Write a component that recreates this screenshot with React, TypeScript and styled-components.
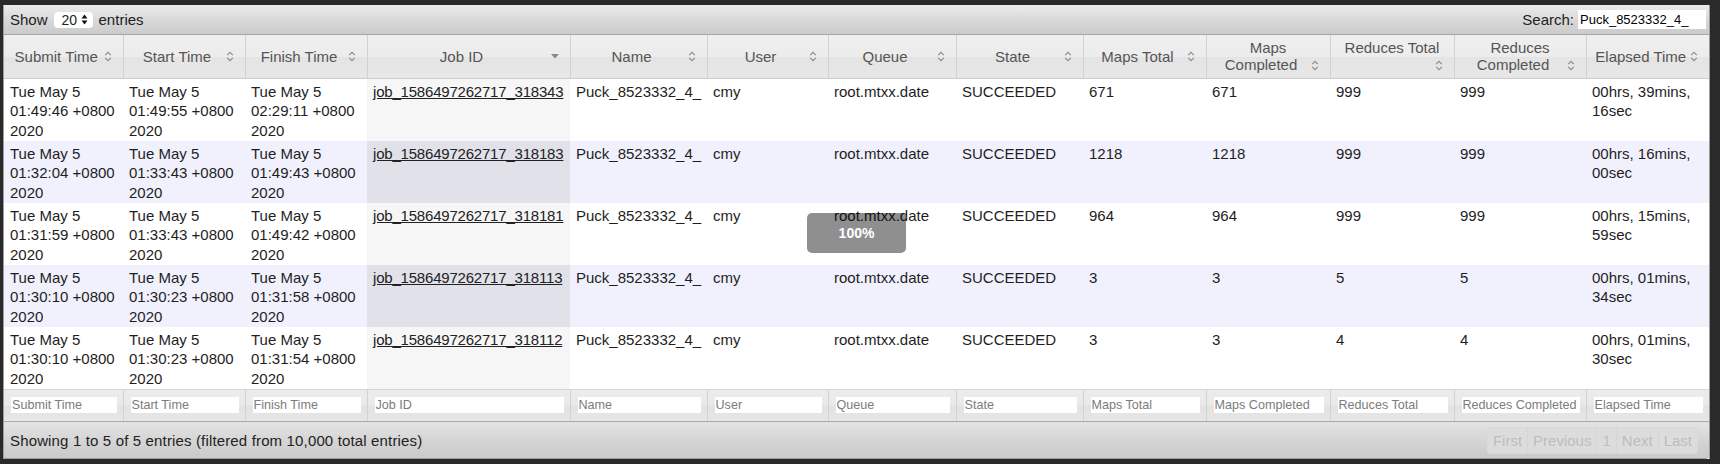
import React from "react";
import styled, { createGlobalStyle } from "styled-components";

const GlobalStyle = createGlobalStyle`
  html, body {
    margin: 0;
    padding: 0;
    background: #2a2a2a;
  }
  body {
    font-family: "Liberation Sans", Helvetica, Arial, sans-serif;
    font-size: 15px;
    color: #222;
  }
`;

type SortKind = "both" | "desc";

interface IColumn {
  title: string;
  width: number;
  sort: SortKind;
}

const columns: IColumn[] = [
  { title: "Submit Time", width: 119, sort: "both" },
  { title: "Start Time", width: 122, sort: "both" },
  { title: "Finish Time", width: 122, sort: "both" },
  { title: "Job ID", width: 203, sort: "desc" },
  { title: "Name", width: 137, sort: "both" },
  { title: "User", width: 121, sort: "both" },
  { title: "Queue", width: 128, sort: "both" },
  { title: "State", width: 127, sort: "both" },
  { title: "Maps Total", width: 123, sort: "both" },
  { title: "Maps Completed", width: 124, sort: "both" },
  { title: "Reduces Total", width: 124, sort: "both" },
  { title: "Reduces Completed", width: 132, sort: "both" },
  { title: "Elapsed Time", width: 123, sort: "both" },
];

interface IJob {
  submit: string;
  start: string;
  finish: string;
  id: string;
  mapsTotal: string;
  mapsDone: string;
  redTotal: string;
  redDone: string;
  elapsed: [string, string];
}

const jobs: IJob[] = [
  {
    submit: "01:49:46",
    start: "01:49:55",
    finish: "02:29:11",
    id: "job_1586497262717_318343",
    mapsTotal: "671",
    mapsDone: "671",
    redTotal: "999",
    redDone: "999",
    elapsed: ["00hrs, 39mins,", "16sec"],
  },
  {
    submit: "01:32:04",
    start: "01:33:43",
    finish: "01:49:43",
    id: "job_1586497262717_318183",
    mapsTotal: "1218",
    mapsDone: "1218",
    redTotal: "999",
    redDone: "999",
    elapsed: ["00hrs, 16mins,", "00sec"],
  },
  {
    submit: "01:31:59",
    start: "01:33:43",
    finish: "01:49:42",
    id: "job_1586497262717_318181",
    mapsTotal: "964",
    mapsDone: "964",
    redTotal: "999",
    redDone: "999",
    elapsed: ["00hrs, 15mins,", "59sec"],
  },
  {
    submit: "01:30:10",
    start: "01:30:23",
    finish: "01:31:58",
    id: "job_1586497262717_318113",
    mapsTotal: "3",
    mapsDone: "3",
    redTotal: "5",
    redDone: "5",
    elapsed: ["00hrs, 01mins,", "34sec"],
  },
  {
    submit: "01:30:10",
    start: "01:30:23",
    finish: "01:31:54",
    id: "job_1586497262717_318112",
    mapsTotal: "3",
    mapsDone: "3",
    redTotal: "4",
    redDone: "4",
    elapsed: ["00hrs, 01mins,", "30sec"],
  },
];

const SortIcon: React.FC<{ kind: SortKind }> = ({ kind }) => (
  <IconBox>
    {kind === "both" ? (
      <svg width="8" height="11" viewBox="0 0 8 11">
        <path d="M1.2 4.2 L4 1.4 L6.8 4.2" fill="none" stroke="#8a8a8a" strokeWidth="1.1" />
        <path d="M1.2 6.8 L4 9.6 L6.8 6.8" fill="none" stroke="#8a8a8a" strokeWidth="1.1" />
      </svg>
    ) : (
      <svg width="8" height="5" viewBox="0 0 8 5">
        <polygon points="0,0 8,0 4,4.5" fill="#8a8a8a" />
      </svg>
    )}
  </IconBox>
);

const DateCell: React.FC<{ time: string }> = ({ time }) => (
  <>
    Tue May 5
    <br />
    {time} +0800
    <br />
    2020
  </>
);

const App: React.FC = () => {
  return (
    <>
      <GlobalStyle />
      <Page>
        <Widget>
          <Toolbar>
            <ToolGroup>
              Show
              <SelectBox>
                20
                <svg width="7" height="11" viewBox="0 0 7 11">
                  <polygon points="0.5,4.5 6.5,4.5 3.5,0.5" fill="#111" />
                  <polygon points="0.5,6.5 6.5,6.5 3.5,10.5" fill="#111" />
                </svg>
              </SelectBox>
              entries
            </ToolGroup>
            <ToolGroup>
              Search:
              <SearchInput readOnly value="Puck_8523332_4_" />
            </ToolGroup>
          </Toolbar>

          <Table>
            <colgroup>
              {columns.map((c) => (
                <col key={c.title} style={{ width: c.width }} />
              ))}
            </colgroup>
            <thead>
              <tr>
                {columns.map((c) => (
                  <HeadCell key={c.title}>
                    {c.title}
                    <SortIcon kind={c.sort} />
                  </HeadCell>
                ))}
              </tr>
            </thead>
            <tbody>
              {jobs.map((j, i) => {
                const even = i % 2 === 1;
                return (
                  <Row key={j.id} $even={even}>
                    <Cell>
                      <DateCell time={j.submit} />
                    </Cell>
                    <Cell>
                      <DateCell time={j.start} />
                    </Cell>
                    <Cell>
                      <DateCell time={j.finish} />
                    </Cell>
                    <Cell $sorted $even={even}>
                      <JobLink href="#">{j.id}</JobLink>
                    </Cell>
                    <Cell>Puck_8523332_4_</Cell>
                    <Cell>cmy</Cell>
                    <Cell>root.mtxx.date</Cell>
                    <Cell>SUCCEEDED</Cell>
                    <Cell>{j.mapsTotal}</Cell>
                    <Cell>{j.mapsDone}</Cell>
                    <Cell>{j.redTotal}</Cell>
                    <Cell>{j.redDone}</Cell>
                    <Cell>
                      {j.elapsed[0]}
                      <br />
                      {j.elapsed[1]}
                    </Cell>
                  </Row>
                );
              })}
            </tbody>
            <tfoot>
              <tr>
                {columns.map((c) => (
                  <FilterCell key={c.title}>
                    <FilterInput placeholder={c.title} />
                  </FilterCell>
                ))}
              </tr>
            </tfoot>
          </Table>

          <Footer>
            <FooterInfo>Showing 1 to 5 of 5 entries (filtered from 10,000 total entries)</FooterInfo>
            <Pager>
              <PageButton>First</PageButton>
              <PageButton>Previous</PageButton>
              <PageButton>1</PageButton>
              <PageButton>Next</PageButton>
              <PageButton>Last</PageButton>
            </Pager>
          </Footer>

          <Progress>100%</Progress>
        </Widget>
      </Page>
    </>
  );
};

export default App;

const Page = styled.div`
  padding: 5px 10px 5px 3px;
`;

const Widget = styled.div`
  position: relative;
  width: 1707px;
  box-sizing: border-box;
  border-left: 1px solid #9c9c9c;
  border-right: 1px solid #9c9c9c;
  background: #fff;
`;

const Toolbar = styled.div`
  height: 29px;
  display: flex;
  align-items: center;
  justify-content: space-between;
  padding: 0 3px 0 6px;
  background: linear-gradient(#ebebeb, #d6d6d6 60%, #cbcbcb);
  border-bottom: 1px solid #a6a6a6;
  font-size: 15px;
  color: #222;
`;

const ToolGroup = styled.div`
  display: flex;
  align-items: center;
  gap: 5px;
`;

const SelectBox = styled.span`
  display: inline-flex;
  align-items: center;
  justify-content: space-between;
  width: 39px;
  height: 16px;
  box-sizing: border-box;
  padding: 0 5px 0 8px;
  margin: 0 1px;
  background: #fff;
  border-radius: 4px;
  font-size: 14px;
`;

const SearchInput = styled.input`
  width: 128px;
  height: 19px;
  box-sizing: border-box;
  border: 0;
  padding: 0 2px;
  margin-left: -1px;
  font-family: "Liberation Sans", Helvetica, Arial, sans-serif;
  font-size: 13px;
  color: #000;
  background: #fff;
  outline: 0;
`;

const Table = styled.table`
  width: 100%;
  table-layout: fixed;
  border-collapse: collapse;
`;

const HeadCell = styled.th`
  height: 43px;
  padding: 3px 8px 3px 8px;
  box-sizing: border-box;
  vertical-align: middle;
  text-align: center;
  font-weight: normal;
  font-size: 15px;
  line-height: 17.5px;
  color: #555;
  background: linear-gradient(#efefef 0%, #ececec 50%, #e4e4e4 52%, #e7e7e7 100%);
  border-left: 1px solid #d2d2d2;
  border-bottom: 1px solid #cdcdcd;

  &:first-child {
    border-left: 0;
  }
`;

const IconBox = styled.span`
  float: right;
  width: 14px;
  height: 17.5px;
  display: flex;
  align-items: center;
  justify-content: center;
`;

const Row = styled.tr<{ $even: boolean }>`
  background: ${(p) => (p.$even ? "#f1f1fd" : "#fff")};
`;

const Cell = styled.td<{ $sorted?: boolean; $even?: boolean }>`
  padding: 3px 4px 0.5px 6px;
  vertical-align: top;
  font-size: 15px;
  line-height: 19.5px;
  color: #1e1e1e;
  white-space: nowrap;
  overflow: hidden;
  background: ${(p) => (p.$sorted ? (p.$even ? "#e1e1e9" : "#f6f6f6") : "transparent")};
`;

const JobLink = styled.a`
  color: #222;
  text-decoration: underline;
  letter-spacing: -0.2px;
`;

const FilterCell = styled.th`
  height: 32px;
  padding: 0 6px 0 7px;
  box-sizing: border-box;
  vertical-align: middle;
  background: linear-gradient(#ececec 0%, #e9e9e9 50%, #e2e2e2 52%, #e6e6e6 100%);
  border-left: 1px solid #d2d2d2;
  border-top: 1px solid #d6d6d6;

  &:first-child {
    border-left: 0;
  }
`;

const FilterInput = styled.input`
  display: block;
  width: 100%;
  height: 16px;
  box-sizing: border-box;
  border: 0;
  padding: 0 1px;
  font-family: "Liberation Sans", Helvetica, Arial, sans-serif;
  font-size: 12.6px;
  background: #fff;
  outline: 0;

  &::placeholder {
    color: #7c7c7c;
  }
`;

const Footer = styled.div`
  height: 38px;
  box-sizing: border-box;
  display: flex;
  align-items: center;
  justify-content: space-between;
  padding: 0 11px 0 6px;
  background: linear-gradient(#e4e4e4, #d4d4d4 55%, #cacaca);
  border-top: 1px solid #a9a9a9;
  border-bottom: 1px solid #9c9c9c;
  border-bottom-right-radius: 4px;
  font-size: 15px;
  color: #222;
`;

const FooterInfo = styled.span`
  letter-spacing: 0.15px;
`;

const Pager = styled.div`
  display: flex;
  height: 25px;
  margin-top: 1px;
  border: 1px solid #d9d9d9;
  border-radius: 3px;
  background: #dcdcdc;
`;

const PageButton = styled.span`
  display: flex;
  align-items: center;
  padding: 0 5px;
  font-size: 15px;
  color: #bdbdbd;
  border-left: 1px solid #d5d5d5;

  &:first-child {
    border-left: 0;
  }
`;

const Progress = styled.div`
  position: absolute;
  left: 803px;
  top: 208px;
  width: 99px;
  height: 40px;
  display: flex;
  align-items: center;
  justify-content: center;
  border-radius: 5px;
  background: rgba(0, 0, 0, 0.44);
  color: #fff;
  font-weight: bold;
  font-size: 14px;
`;
